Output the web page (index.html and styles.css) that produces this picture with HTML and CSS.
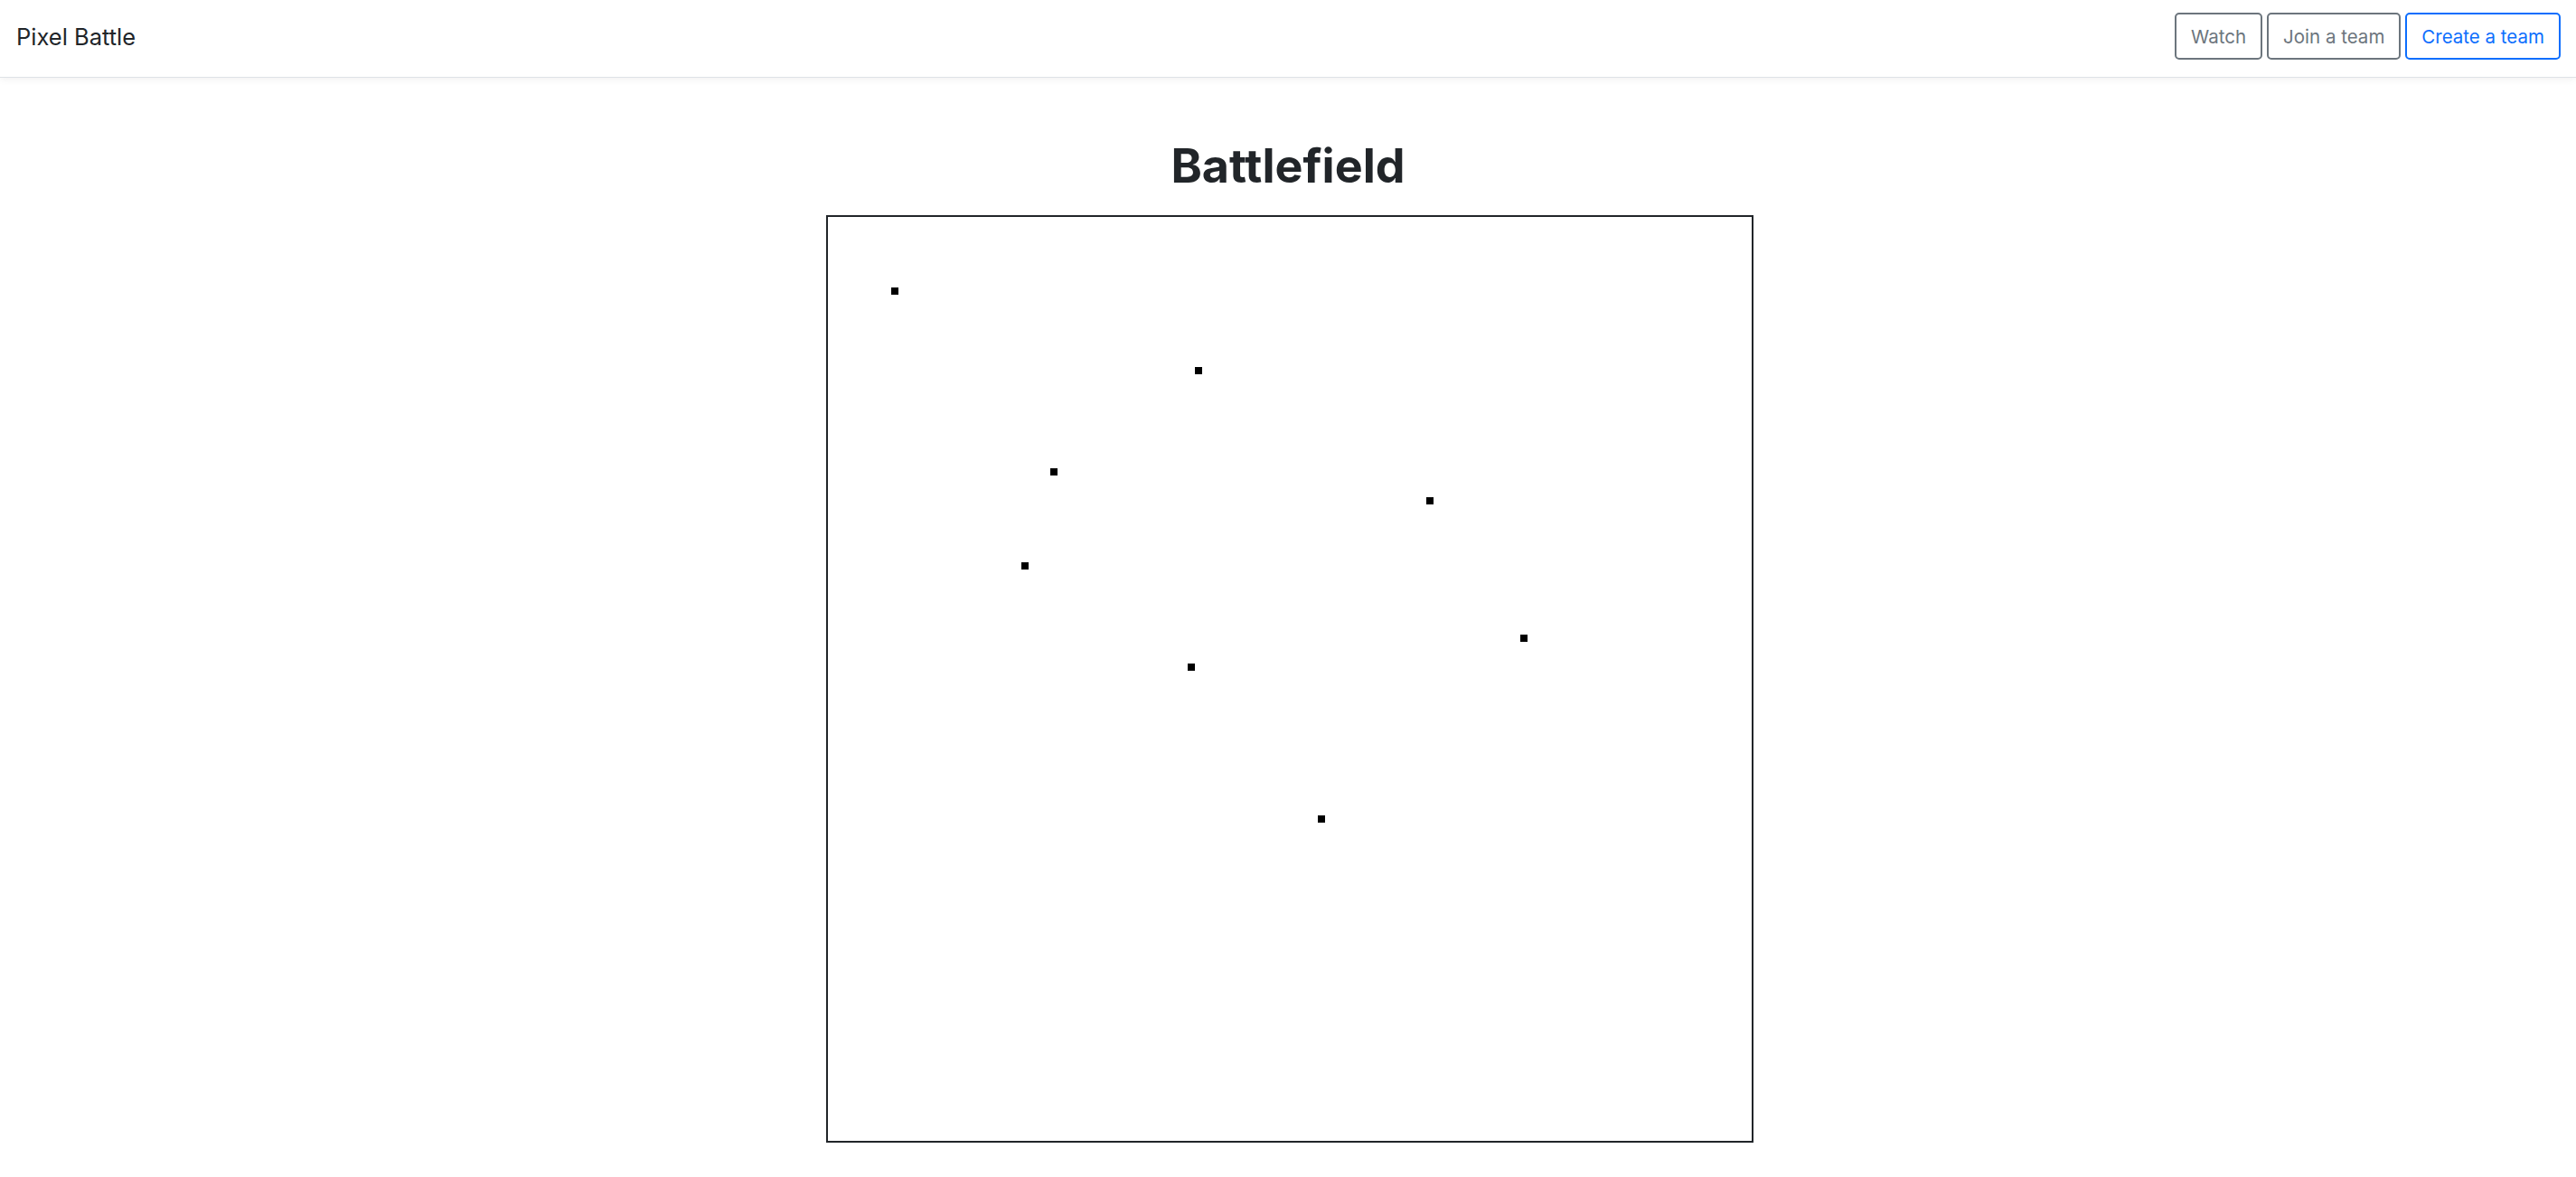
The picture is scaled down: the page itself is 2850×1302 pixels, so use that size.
FILE: index.html
```html
<!DOCTYPE html>
<html>
<head>
<title>Pixel Battle</title>
<link rel="stylesheet" href="styles.css">
</head>
<body>
<nav class="navbar">
  <span class="brand">Pixel Battle</span>
  <div class="actions">
    <button class="btn btn-gray">Watch</button>
    <button class="btn btn-gray">Join a team</button>
    <button class="btn btn-blue">Create a team</button>
  </div>
</nav>

<main class="page">
  <h1 class="title">Battlefield</h1>
  <div class="field">
    <svg width="1022" height="1022" viewBox="0 0 1022 1022">
      <rect x="70" y="78" width="8" height="8"/>
      <rect x="406" y="166" width="8" height="8"/>
      <rect x="662" y="310" width="8" height="8"/>
      <rect x="246" y="278" width="8" height="8"/>
      <rect x="214" y="382" width="8" height="8"/>
      <rect x="766" y="462" width="8" height="8"/>
      <rect x="398" y="494" width="8" height="8"/>
      <rect x="542" y="662" width="8" height="8"/>
    </svg>
  </div>
</main>
</body>
</html>
```

FILE: styles.css
```css
body{
  margin: 0;
  background: #fff;
  color: #212529;
  font-family: Inter, "Noto Sans", sans-serif;
}
.navbar{
  display: flex;
  justify-content: space-between;
  align-items: center;
  height: 85px;
  padding: 0 17px 0 18px;
  border-bottom: 1px solid #dee2e6;
  box-shadow: 0 2px 8px rgba(0,0,0,0.06);
}
.brand{
  font-size: 25.5px;
  color: #212529;
  margin-top: -4px;
}
.actions{
  display: flex;
  gap: 5px;
  margin-top: -5px;
}
.btn{
  font-family: Inter, "Noto Sans", sans-serif;
  font-size: 20.5px;
  background: #fff;
  border: 2px solid #6c757d;
  border-radius: 5px;
  height: 52px;
  padding: 0 16px;
  color: #6c757d;
}
.btn-blue{
  border-color: #0d6efd;
  color: #0d6efd;
}
.page{
  display: flex;
  flex-direction: column;
  align-items: center;
}
.title{
  font-size: 52px;
  font-weight: 700;
  line-height: 62px;
  margin: 67px 0 23px;
}
.field{
  border: 2px solid #212529;
  width: 1022px;
  height: 1022px;
  margin-left: 3px;
}
.field svg{
  display: block;
}
```
